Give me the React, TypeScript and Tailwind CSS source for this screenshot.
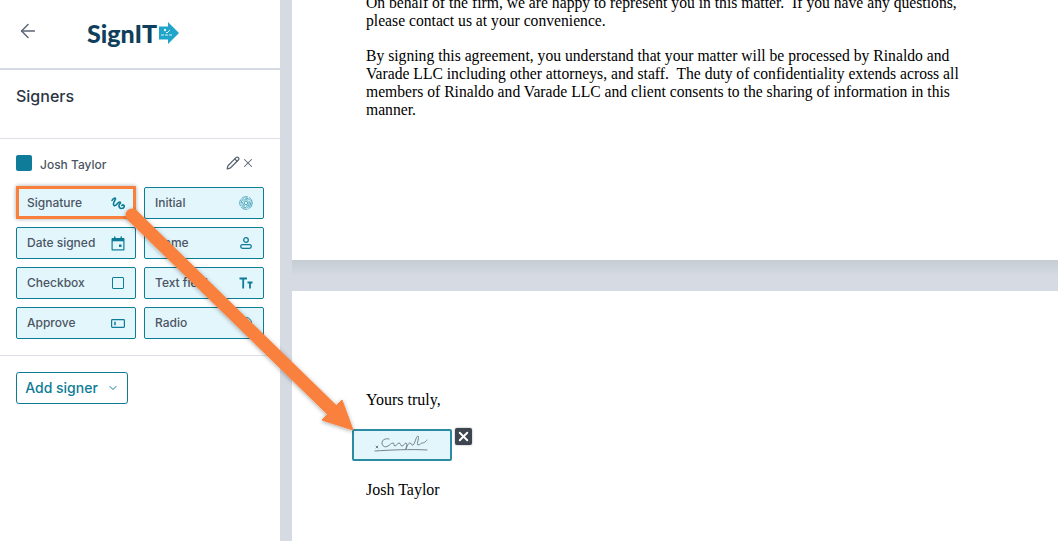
import { ArrowLeft, ChevronDown, Pencil, X } from 'lucide-react'
import type { ReactNode } from 'react'

const SignatureIcon = () => (
  <svg width="14" height="13" viewBox="0 0 14 13" fill="none" stroke="#0e7c96" strokeWidth="1.600" strokeLinecap="round" strokeLinejoin="round">
    <path d="M1 3.500C2 1.500 4 .5 4.500 1.500 5 2.500 2 5 2.500 7.500 3 9.500 5 8.500 6.500 6.500 7.500 5.200 9 4.500 9.500 5.500c.4 1-1.500 1.500-1.500 3s1 3 2.500 3 2.800-1.200 2.800-2.500c0-1.200-1.500-1.500-2.500-.5" />
  </svg>
)

const FingerprintIcon = () => (
  <svg width="14" height="14" viewBox="0 0 14 14" fill="none" stroke="#3d9db3" strokeWidth="0.900">
    <circle cx="7" cy="7" r="6.300" strokeDasharray="7 1" />
    <circle cx="7" cy="7" r="4.800" strokeDasharray="6 1" />
    <circle cx="7" cy="7" r="3.300" strokeDasharray="5 1" />
    <circle cx="7" cy="7" r="1.800" />
  </svg>
)

const CalendarIcon = () => (
  <svg width="14" height="15" viewBox="0 0 14 15" fill="none">
    <path d="M3 .5h1.500V2h5V.5H11V2h1.500c.6 0 1 .4 1 1v10.500c0 .6-.4 1-1 1h-11c-.6 0-1-.4-1-1V3c0-.6.4-1 1-1H3z" fill="#0e7c96" />
    <rect x="1.700" y="5.300" width="10.600" height="8" fill="#e3f6fc" />
    <rect x="8" y="8.500" width="2.500" height="2.500" fill="#0e7c96" />
  </svg>
)

const PersonIcon = () => (
  <svg width="12" height="12" viewBox="0 0 12 12" fill="none" stroke="#0e7c96" strokeWidth="1.300">
    <circle cx="6" cy="3" r="2.300" />
    <rect x=".7" y="7.700" width="10.600" height="3.600" rx="1.800" />
  </svg>
)

const CheckboxIcon = () => <span className="block h-[12px] w-[12px] rounded-[1px] border-[1.5px] border-[#0e7c96]" />

const TextFieldIcon = () => (
  <svg width="14" height="12" viewBox="0 0 14 12" fill="none" stroke="#0e7c96" strokeWidth="1.800">
    <path d="M.5 1.500h7.500M4.200 1.500V11.500M8.500 5.500h5M11 5.500v6" />
  </svg>
)

const ApproveIcon = () => (
  <svg width="14" height="9" viewBox="0 0 14 9" fill="none" stroke="#0e7c96" strokeWidth="1.200">
    <rect x=".6" y=".6" width="12.800" height="7.800" rx=".8" />
    <path d="M4 2.800v3.400" strokeWidth="1.500" />
  </svg>
)

const RadioIcon = () => <span className="block h-[12px] w-[12px] rounded-full border-[1.5px] border-[#0e7c96]" />

const FIELDS: { label: string; icon: ReactNode }[] = [
  { label: 'Signature', icon: <SignatureIcon /> },
  { label: 'Initial', icon: <FingerprintIcon /> },
  { label: 'Date signed', icon: <CalendarIcon /> },
  { label: 'Name', icon: <PersonIcon /> },
  { label: 'Checkbox', icon: <CheckboxIcon /> },
  { label: 'Text field', icon: <TextFieldIcon /> },
  { label: 'Approve', icon: <ApproveIcon /> },
  { label: 'Radio', icon: <RadioIcon /> },
]

function Logo() {
  return (
    <div className="flex items-center gap-[2px]">
      <span className="font-['Lato',sans-serif] text-[25px] leading-none font-black text-[#0f3f5c]">SignIT</span>
      <svg width="20" height="22" viewBox="0 0 20 22">
        <path d="M0 4.500h9V0l11 11L9 22v-4.500H0z" fill="#1ea5c9" />
        <path d="M2 13h3M6 13h3M10 13h3M7 10l1 1 3-3" stroke="#dff4fa" strokeWidth="1" fill="none" />
        <circle cx="6" cy="8" r="1.200" fill="#dff4fa" />
      </svg>
    </div>
  )
}

function Sidebar() {
  return (
    <aside className="flex w-[280px] shrink-0 flex-col bg-white font-['Inter',sans-serif]">
      <div className="flex h-[70px] items-center border-b-2 border-[#d5dae3] pb-[6px] pl-[17px]">
        <ArrowLeft size={22} color="#5b6675" strokeWidth={1.600} />
        <div className="ml-[48px] pt-[4px]">
          <Logo />
        </div>
      </div>

      <div className="h-[69px] border-b border-[#dcdfe6] px-4 pt-[16px] text-base leading-5 font-medium text-[#2b3543]">Signers</div>

      <div className="border-b border-[#dcdfe6] px-4 pt-4 pb-4">
        <div className="flex h-4 items-center">
          <span className="h-4 w-4 rounded-[2px] bg-[#0f7d99]" />
          <span className="ml-2 translate-y-[2px] text-xs font-medium text-[#4b5563]">Josh Taylor</span>
          <Pencil className="ml-auto" size={14} color="#5b6675" strokeWidth={2.200} />
          <X className="mr-[9px] ml-[1px]" size={14} color="#5b6675" strokeWidth={1.800} />
        </div>
        <div className="mt-4 grid grid-cols-2 gap-2">
          {FIELDS.map(f => (
            <div key={f.label} className="relative flex h-8 items-center justify-between rounded-[2px] border border-[#0e7c96] bg-[#e3f6fc] pr-[10px] pl-[10px] text-xs font-medium text-[#4b5563]">
              {f.label}
              <span className="flex w-[14px] justify-center">{f.icon}</span>
              {f.label === 'Signature' && (
                <span className="absolute -top-[2px] -right-px -bottom-px -left-px border-[3px] border-[#f9803c] shadow-[0_0_4px_rgba(0,0,0,0.35)]" />
              )}
            </div>
          ))}
        </div>
      </div>

      <div className="px-4 pt-4">
        <button className="flex h-8 w-[112px] items-center justify-center gap-[9px] rounded-[3px] border border-[#0e7c96] text-sm font-medium text-[#0e7c96]">
          Add signer
          <ChevronDown size={12} strokeWidth={2} />
        </button>
      </div>
    </aside>
  )
}

function Pages() {
  return (
    <main className="flex min-w-0 flex-1 flex-col bg-[#d5dae3] pl-3 font-['Liberation_Serif',serif] text-base leading-[18px] text-black">
      <section className="flex h-[260px] shrink-0 flex-col justify-end bg-white pr-[80px] pb-[141px] pl-[74px] text-[15.65px]">
        <p>
          On behalf of the firm, we are happy to represent you in this matter.&nbsp; If you have any questions,
          <br />
          please contact us at your convenience.
        </p>
        <p className="mt-[17px]">
          By signing this agreement, you understand that your matter will be processed by Rinaldo and
          <br />
          Varade LLC including other attorneys, and staff.&nbsp; The duty of confidentiality extends across all
          <br />
          members of Rinaldo and Varade LLC and client consents to the sharing of information in this
          <br />
          manner.
        </p>
      </section>
      <div className="h-[31px] shrink-0 bg-gradient-to-b from-[#c5ccd3] to-[#d5dae3] to-50%" />
      <section className="flex-1 bg-white pt-[100px] pl-[74px]">
        <p>Yours truly,</p>
        <div className="mt-[20px] -ml-[14px] flex items-start">
          <div className="flex h-8 w-[100px] items-center justify-center rounded-[2px] border-2 border-[#2b8ba3] bg-[#e3f6fc]">
            <svg width="56" height="20" viewBox="0 0 56 20" fill="none" stroke="#76808c" strokeWidth="1" strokeLinecap="round">
              <path d="M2 11l2 2M4 11l-2 2" />
              <path d="M15 4c-4-1-7 1-7 4s3 5 6 3c2-1 3-3 5-3s0 3 2 3 2-3 4-3 1 3 3 3 2-3 4-3-1 8 0 6 2-6 4-6 1 3 3 2 3-9 5-9-2 9 0 9 3-2 4-2 3 0 5-3" />
              <path d="M1 16c15-1 36-2 52-1" />
            </svg>
          </div>
          <span className="ml-[3px] -mt-px flex h-[17px] w-[17px] items-center justify-center rounded-[2px] bg-[#3d4550] shadow-[0_0_2px_rgba(0,0,0,0.4)]">
            <X size={15} color="#fff" strokeWidth={3} />
          </span>
        </div>
        <p className="mt-[20px]">Josh Taylor</p>
      </section>
    </main>
  )
}

export default function App() {
  return (
    <div className="relative flex h-[541px] w-[1058px] overflow-hidden bg-white">
      <Sidebar />
      <Pages />
      {/* callout arrow sits over both panels */}
      <svg className="pointer-events-none absolute inset-0" width="1058" height="541" viewBox="0 0 1058 541">
        <defs>
          <filter id="arrow-shadow" x="-10%" y="-10%" width="120%" height="120%">
            <feDropShadow dx="0" dy="1" stdDeviation="2" floodColor="#000" floodOpacity="0.35" />
          </filter>
        </defs>
        <g filter="url(#arrow-shadow)">
          <path d="M132 215L332 410" stroke="#f9803c" strokeWidth="13" strokeLinecap="round" />
          <path d="M353 430L342 400L322 420Z" fill="#f9803c" stroke="#f9803c" strokeWidth="1" strokeLinejoin="round" />
        </g>
      </svg>
    </div>
  )
}
